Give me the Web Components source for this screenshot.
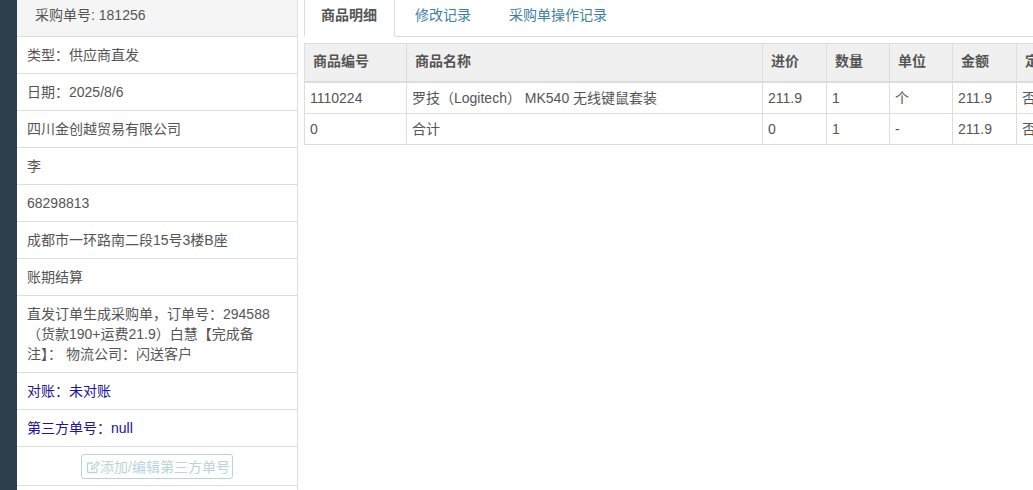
<!DOCTYPE html>
<html lang="zh">
<head>
<meta charset="utf-8">
<title>采购单</title>
<style>
    html, body { margin: 0; height: 100%; overflow: hidden; background: #fff; }
    body { font: 14px/20px "Liberation Sans", "Noto Sans CJK SC", sans-serif; color: #555; }
</style>
</head>
<body>
<order-page>
    <side-panel slot="side">
        <side-row head>采购单号: 181256</side-row>
        <side-row>类型：供应商直发</side-row>
        <side-row>日期：2025/8/6</side-row>
        <side-row>四川金创越贸易有限公司</side-row>
        <side-row>李</side-row>
        <side-row>68298813</side-row>
        <side-row>成都市一环路南二段15号3楼B座</side-row>
        <side-row>账期结算</side-row>
        <side-row>直发订单生成采购单，订单号：294588（货款190+运费21.9）白慧【完成备注】： 物流公司：闪送客户</side-row>
        <side-row blue>对账：未对账</side-row>
        <side-row blue>第三方单号：null</side-row>
        <side-row center><edit-button>添加/编辑第三方单号</edit-button></side-row>
    </side-panel>
    <tab-bar slot="main"></tab-bar>
    <goods-table slot="main"></goods-table>
</order-page>

<script>
class OrderPage extends HTMLElement {
    connectedCallback() {
        this.attachShadow({ mode: "open" });
        this.shadowRoot.innerHTML = /*HTML */ `
<style>
    :host { display: flex; height: 490px; overflow: hidden; }
    .rail { flex: 0 0 17px; background: #2f3e4b; }
    .side { flex: 0 0 281px; }
    .main { flex: 1; min-width: 0; padding-left: 6px; overflow: hidden; }
</style>
<div class="rail"></div>
<div class="side"><slot name="side"></slot></div>
<div class="main"><slot name="main"></slot></div>`;
    }
}

class SidePanel extends HTMLElement {
    connectedCallback() {
        this.attachShadow({ mode: "open" });
        this.shadowRoot.innerHTML = /*HTML */ `
<style>
    :host { display: block; height: 490px; box-sizing: border-box; border-right: 1px solid #ddd; }
</style>
<slot></slot>`;
    }
}

class SideRow extends HTMLElement {
    connectedCallback() {
        this.attachShadow({ mode: "open" });
        this.shadowRoot.innerHTML = /*HTML */ `
<style>
    :host { display: block; padding: 8px 26px 8px 10px; border-bottom: 1px solid #ddd; }
    :host([head]) { background: #f5f5f5; padding: 5px 10px 11px 18px; }
    :host([blue]) { color: #221199; }
    :host([center]) { text-align: center; padding: 7px 10px 6px 10px; height: 25px; }
</style>
<slot></slot>`;
    }
}

class EditButton extends HTMLElement {
    connectedCallback() {
        this.attachShadow({ mode: "open" });
        this.shadowRoot.innerHTML = /*HTML */ `
<style>
    :host { display: inline-flex; align-items: center; height: 25px; box-sizing: border-box; padding: 0 2px 0 4px;
        border: 1px solid #b5d5de; border-radius: 3px; color: #b9d4dd; font-size: 14px; }
    svg { width: 14px; height: 14px; flex: none; }
</style>
<svg viewBox="0 0 14 14" fill="none" stroke="#b5d5de" stroke-width="1.3">
    <path d="M11 8v3.5a1 1 0 0 1-1 1H2.5a1 1 0 0 1-1-1V4a1 1 0 0 1 1-1H7"/>
    <path d="M5.5 9.5l.5-2.2L11.5 1.8l1.7 1.7L7.7 9z"/>
</svg><slot></slot>`;
    }
}

class TabBar extends HTMLElement {
    connectedCallback() {
        this.attachShadow({ mode: "open" });
        this.shadowRoot.innerHTML = /*HTML */ `
<style>
    :host { display: flex; height: 37px; box-sizing: border-box; border-bottom: 1px solid #ddd; }
    a { display: block; height: 37px; box-sizing: border-box; padding: 5px 18px 0; margin-left: 2px; color: #3f7fa6; white-space: nowrap; }
    a:nth-child(2) { padding-right: 16px; }
    a.on { color: #555; font-weight: bold; background: #fff; margin-left: 0; padding: 5px 17px 0 16px;
        border-left: 1px solid #ddd; border-right: 1px solid #ddd; border-bottom: 1px solid #fff; }
</style>
<a class="on">商品明细</a><a>修改记录</a><a>采购单操作记录</a>`;
    }
}

class GoodsTable extends HTMLElement {
    connectedCallback() {
        this.attachShadow({ mode: "open" });
        const head = ["商品编号", "商品名称", "进价", "数量", "单位", "金额", "定"];
        const rows = [
            ["1110224", "罗技（Logitech） MK540 无线键鼠套装", "211.9", "1", "个", "211.9", "否"],
            ["0", "合计", "0", "1", "-", "211.9", "否"]
        ];
        const widths = [102, 356, 64, 63, 63, 64, 60];
        this.shadowRoot.innerHTML = /*HTML */ `
<style>
    :host { display: block; margin-top: 6px; width: 772px; }
    table { border-collapse: collapse; table-layout: fixed; width: 772px; }
    th, td { border: 1px solid #ddd; padding: 0 5px; text-align: left; white-space: nowrap; overflow: hidden; }
    th { background: #f0f0f0; height: 38px; padding: 0 8px 2px; box-sizing: border-box; border-bottom-width: 2px; font-weight: bold; }
    td { height: 30px; }
</style>
<table>
    <colgroup>${widths.map(w => `<col style="width:${w}px">`).join("")}</colgroup>
    <thead><tr>${head.map(h => `<th>${h}</th>`).join("")}</tr></thead>
    <tbody>${rows.map(r => `<tr>${r.map(c => `<td>${c}</td>`).join("")}</tr>`).join("")}</tbody>
</table>`;
    }
}

customElements.define("order-page", OrderPage);
customElements.define("side-panel", SidePanel);
customElements.define("side-row", SideRow);
customElements.define("edit-button", EditButton);
customElements.define("tab-bar", TabBar);
customElements.define("goods-table", GoodsTable);
</script>
</body>
</html>
